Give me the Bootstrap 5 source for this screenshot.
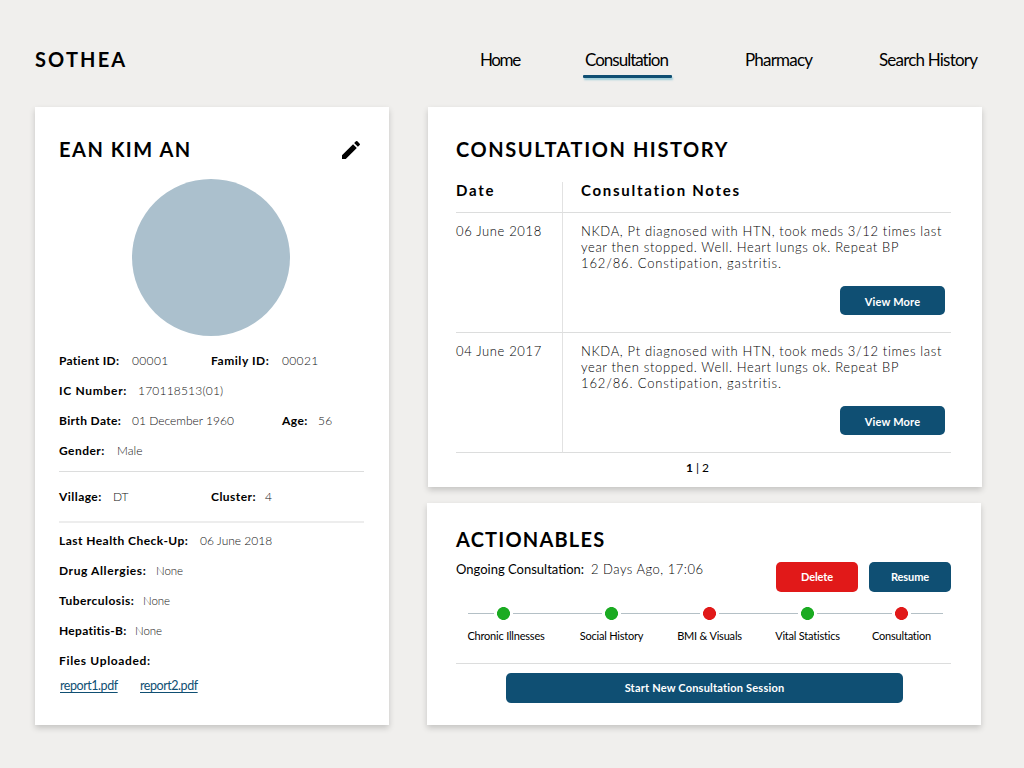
<!DOCTYPE html>
<html lang="en">
<head>
<meta charset="utf-8">
<meta name="viewport" content="width=device-width, initial-scale=1">
<title>Sothea – Consultation</title>
<link href="https://cdn.jsdelivr.net/npm/bootstrap@5.3.0/dist/css/bootstrap.min.css" rel="stylesheet">
<style>
  :root { --navy:#0f4f73; --rule:#dcdddd; }
  body { background:#f0efed; color:#000; font-family:Lato,"Liberation Sans",sans-serif; font-size:12px; line-height:16px; width:1024px; height:768px; overflow:hidden; }
  a { color:var(--navy); }
  .top-bar { height:107px; padding:0 0 0 35px; }
  .brand-name { font-size:20px; font-weight:700; line-height:24px; letter-spacing:2.15px; margin-top:47px; width:445px; }
  .top-links { display:grid; grid-template-columns:105px 160px 134px auto; margin-top:48px; }
  .top-links .nav-link { padding:0; color:#000; font-size:17px; line-height:24px; letter-spacing:-.8px; white-space:nowrap; justify-self:start; }
  .top-links .nav-link:first-child { letter-spacing:-1.4px; }
  .top-links .active { position:relative; letter-spacing:-1px; }
  .top-links .active::after { content:""; position:absolute; left:-2px; top:27px; width:89px; height:3px; border-radius:1px; background:var(--navy); box-shadow:1px 2px 2px rgba(0,140,180,.35); }
  .panel { background:#fff; border:0; border-radius:0; box-shadow:0 3px 6px rgba(0,0,0,.18); }
  .panel h2 { font-size:20px; font-weight:700; line-height:24px; margin:-1px 0 1px; white-space:nowrap; }
  .page-grid { display:grid; grid-template-columns:354px 555px; column-gap:38px; padding-left:35px; }
  .patient { height:618px; padding:31px 26px 0 24px; }
  .patient h2 { letter-spacing:1.5px; }
  .avatar { width:158px; height:157px; border-radius:50%; background:#abc0cd; margin:17px 0 0 73px; }
  .fields > div { display:flex; height:30px; white-space:nowrap; }
  .fields dl { display:flex; margin:0; }
  .fields dt { font-weight:700; font-size:12px; letter-spacing:.45px; }
  .fields dd { margin:0; font-weight:300; letter-spacing:0; color:#111; }
  .identity { padding-top:17px; } .identity > div:last-child { height:28px; }
  .locale { padding-top:17px; } .locale > div:last-child { height:32px; }
  .health { padding-top:10px; } .health > div:last-child { height:25px; }
  .half { width:152px; }
  .rule { height:1px; background:var(--rule); margin-right:-1px; }
  .todo .rule { margin-right:0; }
  .rule-soft { height:2px; background:#ededed; margin-right:-1px; }
  .w-id dt { width:73px; letter-spacing:.3px; } .w-fam dt { width:71px; letter-spacing:.55px; } .w-ic dt { width:79px; letter-spacing:.7px; }
  .w-id dd, .w-fam dd { letter-spacing:.35px; } .w-ic dd { letter-spacing:.2px; }
  .w-birth { width:223px; } .w-birth dt { width:73px; letter-spacing:.35px; } .w-age dt { width:36px; } .w-age dd { letter-spacing:.4px; }
  .w-gender dt { width:58px; } .w-village dt { width:54px; } .w-cluster dt { width:54px; }
  .w-check dt { width:141px; } .w-drug dt { width:97px; letter-spacing:.6px; } .w-tb dt { width:84px; } .w-hep dt { width:76px; letter-spacing:.3px; }
  .w-drug dd, .w-tb dd, .w-hep dd { font-size:11.5px; letter-spacing:-.1px; }
  .health .w-files dt { letter-spacing:.65px; }
  .files { padding-left:1px; }
  .files a { font-size:12.5px; width:80px; letter-spacing:-.45px; text-underline-offset:2px; }
  .history { width:554px; height:380px; margin-left:1px; padding:31px 31px 0 28px; }
  .history h2 { letter-spacing:1.58px; }
  .notes { width:495px; margin:20px 0 0; table-layout:fixed; border-collapse:separate; border-spacing:0; color:#000; --bs-table-bg:transparent; }
  .notes > :not(caption) > * > * { padding:0; border-bottom:1px solid var(--rule); vertical-align:top; }
  .notes tr > :first-child { width:107px; border-right:1px solid #e2e2e2; }
  .notes tr > :nth-child(2) { padding-left:18px; }
  .notes th { height:31px; font-size:15px; line-height:17px; letter-spacing:1.75px; }
  .notes thead th:nth-child(2) { letter-spacing:1.72px; }
  .notes > tbody > tr > td { height:120px; padding-top:10px; font-size:13px; line-height:16px; font-weight:300; letter-spacing:.64px; white-space:nowrap; }
  .note-end { letter-spacing:.85px; }
  .act { --bs-btn-color:#fff; --bs-btn-hover-color:#fff; --bs-btn-bg:var(--navy); --bs-btn-hover-bg:#0b3f5d; border:0; border-radius:5px; padding:0; font-size:11px; line-height:16px; font-weight:700; letter-spacing:.2px; height:30px; width:82px; }
  .act-more { width:105px; height:29px; margin:15px 6px 0 0; padding-top:2px; }
  .act-red { --bs-btn-bg:#e11919; --bs-btn-hover-bg:#b91414; }
  .on-actions { gap:11px; margin-top:10px; }
  .on-actions .act { letter-spacing:-.1px; }
  .act-wide { width:397px; margin:9px 0 0 50px; }
  .pager { margin-top:7px; padding-left:230px; display:flex; gap:3px; }
  .todo { width:554px; height:222px; margin-top:16px; padding:25px 30px 0 29px; }
  .todo h2 { letter-spacing:1.2px; }
  .ongoing { font-size:13px; white-space:nowrap; margin-top:9px; }
  .on-label { width:135px; }
  .on-time { letter-spacing:.5px; }
  .stages { position:relative; display:grid; grid-template-columns:95px 121px 75px 121px 67px; margin-top:14px; text-align:center; font-size:11px; letter-spacing:-.2px; white-space:nowrap; height:57px; }
  .stages::before { content:""; position:absolute; left:12px; top:7px; width:475px; height:1px; background:#b4c0c6; }
  .stages > div { position:relative; }
  .stages > div:first-child span { padding-left:5px; }
  .dot { display:block; width:19px; height:13px; margin:1px auto 8px; border:solid #fff; border-width:0 3px; background:#fff radial-gradient(circle,#1bab22 6.1px,transparent 6.8px); }
  .dot-late { background-image:radial-gradient(circle,#e11919 6.1px,transparent 6.8px); }
</style>
</head>
<body>
<header class="top-bar d-flex align-items-start">
  <div class="brand-name">SOTHEA</div>
  <nav class="nav top-links">
    <a class="nav-link" href="#">Home</a>
    <a class="nav-link active" href="#">Consultation</a>
    <a class="nav-link" href="#">Pharmacy</a>
    <a class="nav-link" href="#">Search History</a>
  </nav>
</header>
<main class="page-grid">
  <section class="card panel patient">
    <div class="d-flex justify-content-between align-items-start">
      <h2>EAN KIM AN</h2>
      <svg width="24" height="24" viewBox="0 0 24 24" aria-label="Edit"><path d="M3 17.25V21h3.75L17.81 9.94l-3.75-3.75zM20.71 7.04a1 1 0 0 0 0-1.41l-2.34-2.34a1 1 0 0 0-1.41 0l-1.83 1.83 3.75 3.75z"/></svg>
    </div>
    <div class="avatar"></div>
    <div class="fields identity">
      <div><dl class="half w-id"><dt>Patient ID:</dt><dd>00001</dd></dl><dl class="w-fam"><dt>Family ID:</dt><dd>00021</dd></dl></div>
      <div><dl class="w-ic"><dt>IC Number:</dt><dd>170118513(01)</dd></dl></div>
      <div><dl class="w-birth"><dt>Birth Date:</dt><dd>01 December 1960</dd></dl><dl class="w-age"><dt>Age:</dt><dd>56</dd></dl></div>
      <div><dl class="w-gender"><dt>Gender:</dt><dd>Male</dd></dl></div>
    </div>
    <div class="rule"></div>
    <div class="fields locale">
      <div><dl class="half w-village"><dt>Village:</dt><dd>DT</dd></dl><dl class="w-cluster"><dt>Cluster:</dt><dd>4</dd></dl></div>
    </div>
    <div class="rule-soft"></div>
    <div class="fields health">
      <div><dl class="w-check"><dt>Last Health Check-Up:</dt><dd>06 June 2018</dd></dl></div>
      <div><dl class="w-drug"><dt>Drug Allergies:</dt><dd>None</dd></dl></div>
      <div><dl class="w-tb"><dt>Tuberculosis:</dt><dd>None</dd></dl></div>
      <div><dl class="w-hep"><dt>Hepatitis-B:</dt><dd>None</dd></dl></div>
      <div><dl class="w-files"><dt>Files Uploaded:</dt></dl></div>
    </div>
    <div class="files d-flex"><a href="#">report1.pdf</a><a href="#">report2.pdf</a></div>
  </section>
  <div>
    <section class="card panel history">
      <h2>CONSULTATION HISTORY</h2>
      <table class="table notes">
        <thead><tr><th>Date</th><th>Consultation Notes</th></tr></thead>
        <tbody>
          <tr><td>06 June 2018</td><td>NKDA, Pt diagnosed with HTN, took meds 3/12 times last<br>year then stopped. Well. Heart lungs ok. Repeat BP<br><span class="note-end">162/86. Constipation, gastritis.</span><div class="d-flex justify-content-end"><button class="btn act act-more">View More</button></div></td></tr>
          <tr><td>04 June 2017</td><td>NKDA, Pt diagnosed with HTN, took meds 3/12 times last<br>year then stopped. Well. Heart lungs ok. Repeat BP<br><span class="note-end">162/86. Constipation, gastritis.</span><div class="d-flex justify-content-end"><button class="btn act act-more">View More</button></div></td></tr>
        </tbody>
      </table>
      <div class="pager"><b>1</b><span>|</span><span>2</span></div>
    </section>
    <section class="card panel todo">
      <h2>ACTIONABLES</h2>
      <div class="d-flex align-items-start justify-content-between">
        <div class="ongoing d-flex"><span class="on-label">Ongoing Consultation:</span><span class="on-time fw-light">2 Days Ago, 17:06</span></div>
        <div class="d-flex on-actions"><button class="btn act act-red">Delete</button><button class="btn act">Resume</button></div>
      </div>
      <div class="stages">
        <div><i class="dot"></i><span>Chronic Illnesses</span></div>
        <div><i class="dot"></i><span>Social History</span></div>
        <div><i class="dot dot-late"></i><span>BMI &amp; Visuals</span></div>
        <div><i class="dot"></i><span>Vital Statistics</span></div>
        <div><i class="dot dot-late"></i><span>Consultation</span></div>
      </div>
      <div class="rule"></div>
      <button class="btn act act-wide">Start New Consultation Session</button>
    </section>
  </div>
</main>
<script src="https://cdn.jsdelivr.net/npm/bootstrap@5.3.0/dist/js/bootstrap.bundle.min.js"></script>
</body>
</html>
